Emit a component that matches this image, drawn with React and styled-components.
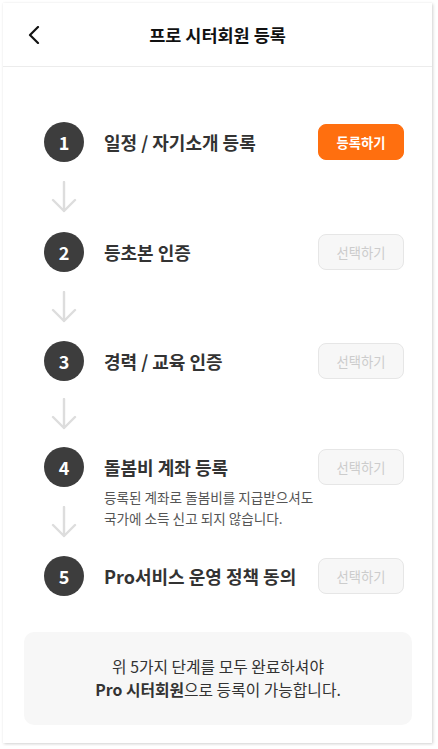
import styled, { createGlobalStyle } from "styled-components";

const GlobalStyle = createGlobalStyle`
  html, body {
    margin: 0;
    padding: 0;
    background: #ffffff;
  }
  body {
    font-family: "Noto Sans CJK KR", "Noto Sans", sans-serif;
    color: #333333;
  }
`;

const Page = styled.div`
  padding: 3px;
  width: 438px;
  box-sizing: border-box;
`;

const Card = styled.div`
  width: 429px;
  height: 740px;
  background: #ffffff;
  box-shadow: 1px 1px 3px rgba(0, 0, 0, 0.18), 0 0 1px rgba(0, 0, 0, 0.06);
  display: flex;
  flex-direction: column;
`;

const Header = styled.header`
  position: relative;
  height: 63px;
  display: flex;
  align-items: center;
  justify-content: center;
  border-bottom: 1px solid #ececec;
`;

const BackButton = styled.button`
  position: absolute;
  left: 16px;
  top: 50%;
  transform: translateY(-50%);
  width: 30px;
  height: 30px;
  padding: 0;
  border: none;
  background: transparent;
  display: flex;
  align-items: center;
  justify-content: center;
  cursor: pointer;
`;

const Title = styled.h1`
  margin: 0;
  font-size: 17.5px;
  font-weight: 700;
  color: #111111;
`;

const Body = styled.div`
  padding: 55px 28px 0 41px;
`;

const Step = styled.div`
  display: grid;
  grid-template-columns: 40px 1fr 86px;
  grid-template-rows: 40px ${({ $after }) => $after}px;
  column-gap: 20px;
  align-items: center;
`;

const Circle = styled.div`
  width: 40px;
  height: 40px;
  border-radius: 50%;
  background: #3d3d3d;
  color: #ffffff;
  font-size: 18px;
  font-weight: 700;
  display: flex;
  align-items: center;
  justify-content: center;
`;

const StepTitle = styled.div`
  font-size: 18px;
  font-weight: 700;
  color: #333333;
  white-space: nowrap;
`;

const ActionButton = styled.button`
  width: 86px;
  height: 36px;
  border-radius: 8px;
  font-family: inherit;
  font-size: 13.3px;
  font-weight: ${({ $active }) => ($active ? 700 : 400)};
  color: ${({ $active }) => ($active ? "#ffffff" : "#cccccc")};
  background: ${({ $active }) => ($active ? "#ff6f0f" : "#f7f7f7")};
  border: 1px solid ${({ $active }) => ($active ? "#ff6f0f" : "#e6e6e6")};
  justify-self: end;
  padding: 0;
  cursor: pointer;
`;

const Connector = styled.div`
  grid-column: 1;
  align-self: stretch;
  display: flex;
  align-items: center;
  justify-content: center;
`;

const Description = styled.p`
  grid-column: 2 / 4;
  align-self: start;
  margin: 0;
  font-size: 13.6px;
  line-height: 21px;
  color: #555555;
`;

const InfoBox = styled.div`
  margin: 36px 20px 0 21px;
  padding: 23px 0 24px;
  background: #f7f7f7;
  border-radius: 10px;
  text-align: center;
  font-size: 15.8px;
  line-height: 23px;
  color: #333333;

  strong {
    font-weight: 700;
  }
`;

const steps = [
  { no: 1, title: "일정 / 자기소개 등록", label: "등록하기", active: true, after: 70 },
  { no: 2, title: "등초본 인증", label: "선택하기", after: 69 },
  { no: 3, title: "경력 / 교육 인증", label: "선택하기", after: 66 },
  {
    no: 4,
    title: "돌봄비 계좌 등록",
    label: "선택하기",
    after: 69,
    desc: ["등록된 계좌로 돌봄비를 지급받으셔도", "국가에 소득 신고 되지 않습니다."],
  },
  { no: 5, title: "Pro서비스 운영 정책 동의", label: "선택하기", after: 0 },
];

const ArrowDown = () => (
  <svg width="26" height="32" viewBox="0 0 26 32" fill="none">
    <path
      d="M13 1 V30 M2 19 L13 30 L24 19"
      stroke="#dddddd"
      strokeWidth="2.4"
      strokeLinecap="round"
      strokeLinejoin="round"
    />
  </svg>
);

const ChevronLeft = () => (
  <svg width="14" height="18" viewBox="0 0 14 18" fill="none">
    <path d="M11 1 L3 9 L11 17" stroke="#111111" strokeWidth="2.2" strokeLinecap="round" strokeLinejoin="round" />
  </svg>
);

const App = () => {
  return (
    <Page>
      <GlobalStyle />
      <Card>
        <Header>
          <BackButton aria-label="뒤로">
            <ChevronLeft />
          </BackButton>
          <Title>프로 시터회원 등록</Title>
        </Header>
        <Body>
          {steps.map((step, index) => (
            <Step key={step.no} $after={step.after}>
              <Circle>{step.no}</Circle>
              <StepTitle>{step.title}</StepTitle>
              <ActionButton $active={step.active}>{step.label}</ActionButton>
              {index < steps.length - 1 && (
                <Connector>
                  <ArrowDown />
                </Connector>
              )}
              {step.desc && (
                <Description>
                  {step.desc[0]}
                  <br />
                  {step.desc[1]}
                </Description>
              )}
            </Step>
          ))}
        </Body>
        <InfoBox>
          위 5가지 단계를 모두 완료하셔야
          <br />
          <strong>Pro 시터회원</strong>으로 등록이 가능합니다.
        </InfoBox>
      </Card>
    </Page>
  );
};

export default App;
